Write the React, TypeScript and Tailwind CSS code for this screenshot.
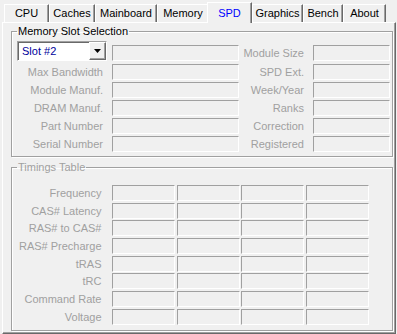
import React from 'react';

const tabs = [
    { name: 'CPU', w: 'w-[45px]' },
    { name: 'Caches', w: 'w-[46px]' },
    { name: 'Mainboard', w: 'w-[62px]' },
    { name: 'Memory', w: 'w-[52px]' },
    { name: 'SPD', w: 'w-[45px]', active: true },
    { name: 'Graphics', w: 'w-[51px]' },
    { name: 'Bench', w: 'w-[40px]' },
    { name: 'About', w: 'w-[43px]' },
];

const leftRows = ['Max Bandwidth', 'Module Manuf.', 'DRAM Manuf.', 'Part Number', 'Serial Number'];
const rightRows = ['SPD Ext.', 'Week/Year', 'Ranks', 'Correction', 'Registered'];
const timingRows = ['Frequency', 'CAS# Latency', 'RAS# to CAS#', 'RAS# Precharge', 'tRAS', 'tRC', 'Command Rate', 'Voltage'];

const Field = ({ w }: { w: string }) => (
    <div className={`${w} h-[16px] shrink-0 border border-t-[#a0a0a0] border-l-[#a0a0a0] border-r-white border-b-white`} />
);

const Label = ({ text, w }: { text: string; w: string }) => (
    <div className={`${w} shrink-0 pr-[9px] text-right leading-[16px] text-[#a0a0a0] whitespace-nowrap`}>{text}</div>
);

const SlotSelect = () => (
    <div className="flex h-[20px] w-[90px] shrink-0 bg-white border border-t-[#a0a0a0] border-l-[#a0a0a0] border-r-white border-b-white shadow-[inset_1px_1px_0_#696969]">
        <span className="flex-1 pl-[4px] pt-[1px] leading-[17px] text-[#00009c]">Slot #2</span>
        <div className="flex w-[17px] items-center justify-center bg-[#f0f0f0] border border-t-white border-l-white border-r-[#696969] border-b-[#696969] shadow-[inset_-1px_-1px_0_#a0a0a0]">
            <svg width="7" height="4" viewBox="0 0 7 4">
                <path d="M0 0h7L3.5 4z" fill="#000" />
            </svg>
        </div>
    </div>
);

export default function App() {
    return (
        <div className="w-[397px] h-[334px] overflow-hidden bg-[#f0f0f0] text-[11px] text-black [font-family:'Liberation_Sans',Arial,sans-serif]">
            {/* tab strip */}
            <div className="flex h-[22px] items-end pl-[4px]">
                {tabs.map((t) =>
                    t.active ? (
                        <div
                            key={t.name}
                            className={`${t.w} relative z-10 -ml-[2px] -mb-[1px] flex h-[21px] items-center justify-center bg-[#f0f0f0] border-l border-t border-r border-l-white border-t-white border-r-[#696969] shadow-[inset_-1px_0_0_#a0a0a0] text-[#0000ff]`}
                        >
                            {t.name}
                        </div>
                    ) : (
                        <div
                            key={t.name}
                            className={`${t.w} flex h-[18px] items-center justify-center border-l border-t border-r border-l-white border-t-white border-r-[#696969] shadow-[inset_-1px_0_0_#a0a0a0]`}
                        >
                            {t.name}
                        </div>
                    )
                )}
            </div>

            {/* tab page */}
            <div className="ml-[2px] w-[394px] h-[312px] border border-l-white border-t-white border-r-[#696969] border-b-[#696969] shadow-[inset_-1px_-1px_0_#a0a0a0]">
                <fieldset className="ml-[8px] mt-[2px] w-[382px] border border-[#a0a0a0] pl-[5px] pr-[2px] pt-[3px] pb-[4px] shadow-[inset_1px_1px_0_#fff,1px_1px_0_#fff]">
                    <legend className="px-[1px] leading-[13px]">Memory Slot Selection</legend>
                    <div className="flex flex-col gap-[2px]">
                        <div className="mb-[1px] flex h-[20px] items-end">
                            <SlotSelect />
                            <div className="w-[5px] shrink-0" />
                            <Field w="w-[127px]" />
                            <Label text="Module Size" w="w-[74px]" />
                            <Field w="w-[77px]" />
                        </div>
                        {leftRows.map((l, i) => (
                            <div key={l} className="flex h-[16px] items-center">
                                <Label text={l} w="w-[95px]" />
                                <Field w="w-[127px]" />
                                <Label text={rightRows[i]} w="w-[74px]" />
                                <Field w="w-[77px]" />
                            </div>
                        ))}
                    </div>
                </fieldset>

                <fieldset className="ml-[8px] mt-[4px] w-[382px] border border-[#a0a0a0] pl-[5px] pr-[2px] pt-[11px] pb-[5px] shadow-[inset_1px_1px_0_#fff,1px_1px_0_#fff]">
                    <legend className="px-[1px] leading-[13px] text-[#a0a0a0]">Timings Table</legend>
                    <div className="flex flex-col gap-[1.7px]">
                        {timingRows.map((l) => (
                            <div key={l} className="flex h-[16px] items-center gap-[1.5px]">
                                <Label text={l} w="w-[93.5px]" />
                                <Field w="w-[63px]" />
                                <Field w="w-[63px]" />
                                <Field w="w-[63px]" />
                                <Field w="w-[63px]" />
                            </div>
                        ))}
                    </div>
                </fieldset>
            </div>
        </div>
    );
}
